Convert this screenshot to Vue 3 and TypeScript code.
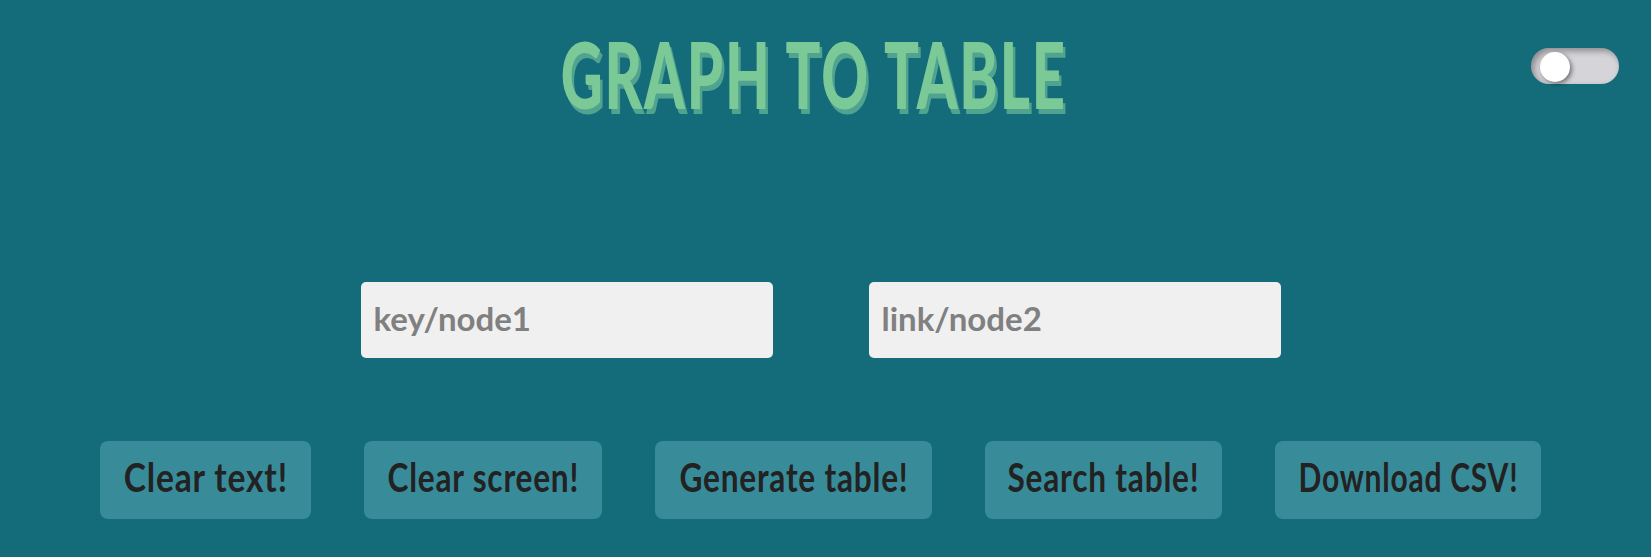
<script setup lang="ts">
import { ref } from 'vue'

interface Action {
  label: string
  width: number
  squeeze: number
}

const dark = ref(false)
const key = ref('')
const link = ref('')
const actions: Action[] = [
  { label: 'Clear text!', width: 211, squeeze: 0.84 },
  { label: 'Clear screen!', width: 238, squeeze: 0.79 },
  { label: 'Generate table!', width: 277, squeeze: 0.79 },
  { label: 'Search table!', width: 237, squeeze: 0.79 },
  { label: 'Download CSV!', width: 266, squeeze: 0.75 },
]
</script>

<template>
  <div class="page">
    <header class="header">
      <h1 class="title">GRAPH TO TABLE</h1>
      <button class="toggle" :class="{ on: dark }" type="button" aria-label="Toggle theme" @click="dark = !dark">
        <span class="knob"></span>
      </button>
    </header>
    <div class="inputs">
      <input v-model="key" class="field" placeholder="key/node1" />
      <input v-model="link" class="field" placeholder="link/node2" />
    </div>
    <div class="actions">
      <button v-for="a in actions" :key="a.label" class="action" type="button" :style="{ width: a.width + 'px' }">
        <span class="action-label" :style="{ transform: `scaleX(${a.squeeze})` }">{{ a.label }}</span>
      </button>
    </div>
  </div>
</template>

<style>
html, body { margin: 0; background: #146c7a; }
</style>

<style scoped>
.page {
  height: 557px;
  box-sizing: border-box;
  overflow: hidden;
  background: #146c7a;
  padding-right: 10px;
  font-family: Lato, "Liberation Sans", sans-serif;
}
.header {
  height: 282px;
  box-sizing: border-box;
  display: flex;
  justify-content: center;
  align-items: flex-start;
  position: relative;
}
.title {
  margin: 26px 0 0 -14px;
  font-size: 92px;
  line-height: 96px;
  font-weight: 900;
  letter-spacing: 3px;
  color: #7bc996;
  text-shadow: 4px 5px 0 #4fa38f;
  white-space: nowrap;
  transform: scaleX(0.63);
}
.toggle {
  position: absolute;
  top: 48px;
  right: 22px;
  width: 88px;
  height: 36px;
  border: 0;
  padding: 0;
  border-radius: 18px;
  background: #d4d4d9;
  box-shadow: inset 3px 3px 6px rgba(0, 0, 0, 0.35);
}
.knob {
  position: absolute;
  top: 4px;
  left: 9px;
  width: 30px;
  height: 30px;
  border-radius: 50%;
  background: #fff;
  box-shadow: 2px 2px 4px rgba(0, 0, 0, 0.45);
}
.toggle.on .knob { left: 49px; }
.inputs {
  display: flex;
  justify-content: center;
  gap: 96px;
}
.field {
  width: 412px;
  height: 76px;
  box-sizing: border-box;
  border: 0;
  outline: 0;
  border-radius: 5px;
  padding: 0 13px 4px;
  background: #f0f0f0;
  color: #222;
  font: 700 33px Lato, "Liberation Sans", sans-serif;
}
.field::placeholder { color: #808080; opacity: 1; }
.actions {
  margin-top: 83px;
  display: flex;
  justify-content: center;
  gap: 53px;
}
.action {
  height: 78px;
  padding: 0 0 6px;
  border: 0;
  border-radius: 8px;
  background: #388c9a;
  color: #222;
  font: 700 40px Lato, "Liberation Sans", sans-serif;
  letter-spacing: 1px;
  white-space: nowrap;
  display: flex;
  align-items: center;
  justify-content: center;
}
.action-label { display: block; flex: none; }
</style>
